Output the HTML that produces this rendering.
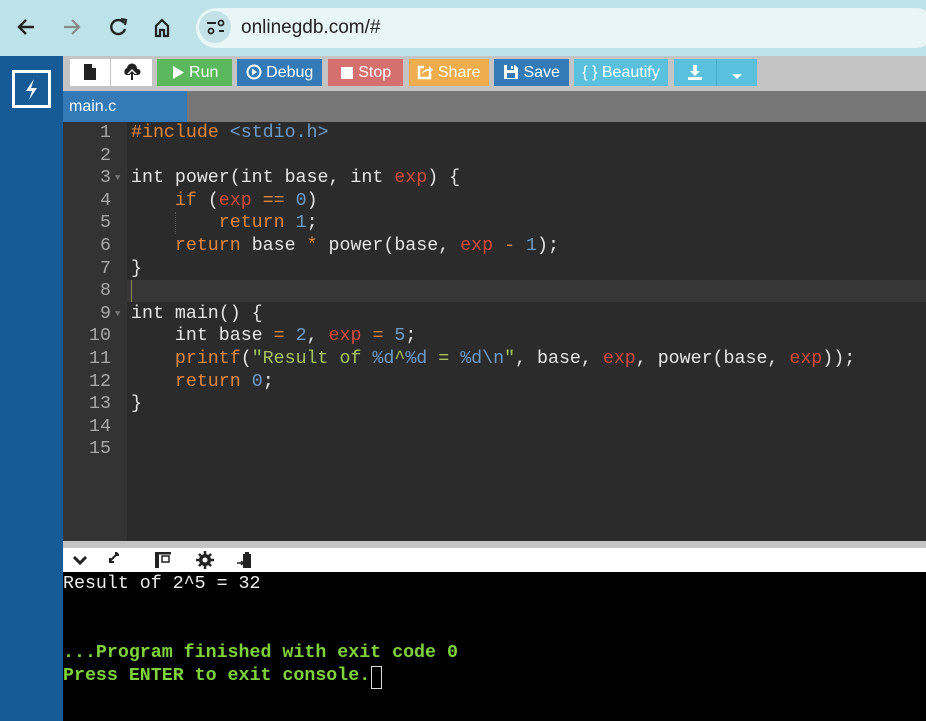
<!DOCTYPE html>
<html><head><meta charset="utf-8"><style>
*{margin:0;padding:0;box-sizing:border-box}
body{width:926px;height:721px;overflow:hidden;background:#2b2b2b;font-family:"Liberation Sans",sans-serif;position:relative}
.abs{position:absolute}
#top{left:0;top:0;width:926px;height:56px;background:#bde3e8}
#pill{left:196px;top:8px;width:740px;height:40px;border-radius:20px;background:#e9f6f7}
#side{left:0;top:56px;width:63px;height:665px;background:#165a96}
#tb{left:63px;top:56px;width:863px;height:35px;background:#c4c4c4}
.btn{position:absolute;top:59px;height:27px;color:#fff;font-size:16px;line-height:27px;text-align:center;white-space:nowrap}
.btn svg{vertical-align:-3px}
#tabs{left:63px;top:91px;width:863px;height:31px;background:#777}
#tab{left:63px;top:91px;width:124px;height:31px;background:#337ab7;color:#fff;font-size:16px;line-height:31px;padding-left:6px}
#gut{left:63px;top:122px;width:64px;height:419px;background:#333}
#hl{left:127px;top:280px;width:799px;height:22px;background:#363636}
pre{font-family:"Liberation Mono",monospace;font-size:18.3px;line-height:22.6px}
#ln{left:63px;top:122px;width:48px;text-align:right;color:#a8a8a8}
#code{left:131px;top:122px;color:#e6e6e6}
.k{color:#e0863a}.r{color:#d44a3a}.n{color:#6d9bc7}.s{color:#a8c45e}
#div{left:63px;top:541px;width:863px;height:7px;background:#c4c4c4}
#ctb{left:63px;top:548px;width:863px;height:24px;background:#fff}
#con{left:63px;top:572px;width:863px;height:149px;background:#000}
#out{left:63px;top:573px;color:#eee;font-family:"Liberation Mono",monospace;font-size:18.3px;line-height:23px}
.g{color:#7ed33a;font-weight:bold}
</style></head><body>
<div id="top" class="abs"></div>
<div id="pill" class="abs"></div>
<svg class="abs" style="left:0;top:0" width="200" height="56">
<path d="M34 27H20M26 20l-7 7 7 7" stroke="#222" stroke-width="2.4" fill="none"/>
<path d="M64 27h14M72 20l7 7-7 7" stroke="#888" stroke-width="2.2" fill="none"/>
<path d="M124 23a7 7 0 1 0 1 6" stroke="#222" stroke-width="2.4" fill="none"/><path d="M121 19l5 1-1 5" stroke="#222" stroke-width="2.2" fill="none"/>
<path d="M156 36V26l6-6 6 6v10h-4v-6h-4v6z" stroke="#222" stroke-width="2.2" fill="none"/>
</svg>
<svg class="abs" style="left:196px;top:8px" width="40" height="40"><circle cx="19" cy="19" r="16" fill="#c2e2e8"/><path d="M11 15h9M23 23h5" stroke="#222" stroke-width="2"/><circle cx="25" cy="15" r="2.5" stroke="#222" stroke-width="1.8" fill="none"/><circle cx="15" cy="23" r="2.5" stroke="#222" stroke-width="1.8" fill="none"/></svg>
<div class="abs" style="left:241px;top:17px;font-size:19px;color:#222">onlinegdb.com/#</div>
<div id="side" class="abs"></div>
<div class="abs" style="left:12px;top:70px;width:39px;height:38px;border:3px solid #fff"></div>
<svg class="abs" style="left:12px;top:70px" width="39" height="38"><path d="M22 9l-8 12h6l-3 9 8-12h-6z" fill="#fff"/></svg>
<div id="tb" class="abs"></div>
<div class="btn" style="left:70px;width:40px;background:#fff"><svg width="14" height="18" style="margin-top:4px"><path d="M1 1h8l4 4v12H1z" fill="#222"/><path d="M9 1v4h4" fill="#fff"/></svg></div>
<div class="btn" style="left:111px;width:41px;background:#fff"><svg width="20" height="18" style="margin-top:4px"><path d="M4 12a4 4 0 0 1 1-7 5 5 0 0 1 10 1 3 3 0 0 1 1 6z" fill="#222"/><path d="M10 6l-5 5h3v6h4v-6h3z" fill="#fff"/><path d="M10 8l-3 3h2v6h2v-6h2z" fill="#222"/></svg></div>
<div class="btn" style="left:157px;width:75px;background:#5cb85c"><svg width="14" height="15"><path d="M2 1l11 6.5L2 14z" fill="#fff"/></svg> Run</div>
<div class="btn" style="left:237px;width:85px;background:#337ab7"><svg width="16" height="16"><circle cx="8" cy="8" r="6.5" stroke="#fff" stroke-width="2" fill="none"/><path d="M6 4.5l5 3.5-5 3.5z" fill="#fff"/></svg> Debug</div>
<div class="btn" style="left:328px;width:75px;background:#d5706e"><svg width="14" height="14"><rect x="1" y="1" width="12" height="12" fill="#fff"/></svg> Stop</div>
<div class="btn" style="left:409px;width:80px;background:#f0ad4e"><svg width="16" height="16"><path d="M7 3H2v11h11V9" stroke="#fff" stroke-width="2.5" fill="none"/><path d="M5 10c1-4 4-5 7-5V2l4 4-4 4V7c-3 0-5 1-7 3z" fill="#fff"/></svg> Share</div>
<div class="btn" style="left:494px;width:75px;background:#337ab7"><svg width="16" height="16"><path d="M1 1h11l3 3v11H1z" fill="#fff"/><rect x="4" y="1" width="7" height="5" fill="#337ab7"/><rect x="8" y="2" width="2" height="3" fill="#fff"/><rect x="4" y="9" width="8" height="5" fill="#337ab7"/></svg> Save</div>
<div class="btn" style="left:574px;width:94px;background:#5bc0de">{ } Beautify</div>
<div class="btn" style="left:674px;width:42px;background:#5bc0de"><svg width="16" height="16"><path d="M6 1h4v6h3l-5 5-5-5h3z" fill="#fff"/><rect x="1" y="13" width="14" height="3" fill="#fff"/></svg></div>
<div class="btn" style="left:716px;width:41px;background:#5bc0de;border-left:1px solid #4aaecb"><svg width="12" height="8"><path d="M1 2h10L6 7z" fill="#fff"/></svg></div>
<div id="tabs" class="abs"></div>
<div id="tab" class="abs">main.c</div>
<div id="gut" class="abs"></div>
<div id="hl" class="abs"></div>
<div class="abs" style="left:131px;top:280px;width:1px;height:22px;background:#8a8a40"></div>
<div class="abs" style="left:175px;top:212px;width:1px;height:22px;border-left:1px dotted #555"></div>
<pre id="ln" class="abs">1
2
3
4
5
6
7
8
9
10
11
12
13
14
15</pre>
<pre class="abs" style="left:115px;top:122px;color:#777;font-size:9px;line-height:22.6px"><br><br>▼<br><br><br><br><br><br>▼</pre>
<pre id="code" class="abs"><span class="k">#include</span> <span class="n">&lt;stdio.h&gt;</span>

int power(int base, int <span class="r">exp</span>) {
    <span class="k">if</span> (<span class="r">exp</span> <span class="k">==</span> <span class="n">0</span>)
        <span class="k">return</span> <span class="n">1</span>;
    <span class="k">return</span> base <span class="k">*</span> power(base, <span class="r">exp</span> <span class="k">-</span> <span class="n">1</span>);
}

int main() {
    int base <span class="k">=</span> <span class="n">2</span>, <span class="r">exp</span> <span class="k">=</span> <span class="n">5</span>;
    <span class="k">printf</span>(<span class="s">"Result of </span><span class="n">%d</span><span class="s">^</span><span class="n">%d</span><span class="s"> = </span><span class="n">%d\n</span><span class="s">"</span>, base, <span class="r">exp</span>, power(base, <span class="r">exp</span>));
    <span class="k">return</span> <span class="n">0</span>;
}</pre>
<div id="div" class="abs"></div>
<div id="ctb" class="abs"></div>
<svg class="abs" style="left:63px;top:548px" width="200" height="24">
<path d="M11 9l6 6 6-6" stroke="#222" stroke-width="3" fill="none"/>
<path d="M52 8l-5 5M47 10v4h4M55 5l-3 3M53 4v3h3" stroke="#222" stroke-width="2" fill="none"/>
<rect x="92" y="4" width="16" height="2.5" fill="#222"/><rect x="92" y="4" width="4" height="16" fill="#222"/><rect x="99" y="8" width="7" height="6" stroke="#222" stroke-width="1.5" fill="none"/>
<path d="M142 3v18M133 12h18M136 6l12 12M148 6l-12 12" stroke="#222" stroke-width="2.5"/><circle cx="142" cy="12" r="6" fill="#222"/><circle cx="142" cy="12" r="2.5" fill="#fff"/>
<path d="M180 6h8v14h-8z" fill="#222"/><path d="M182 4h4v3h-4z" fill="#222"/><path d="M174 15h6M178 13l2 2-2 2" stroke="#222" stroke-width="1.5" fill="none"/>
</svg>
<div id="con" class="abs"></div>
<pre id="out" class="abs">Result of 2^5 = 32


<span class="g">...Program finished with exit code 0
Press ENTER to exit console.</span></pre>
<div class="abs" style="left:371px;top:666px;width:11px;height:23px;border:1.5px solid #ddd"></div>
</body></html>
